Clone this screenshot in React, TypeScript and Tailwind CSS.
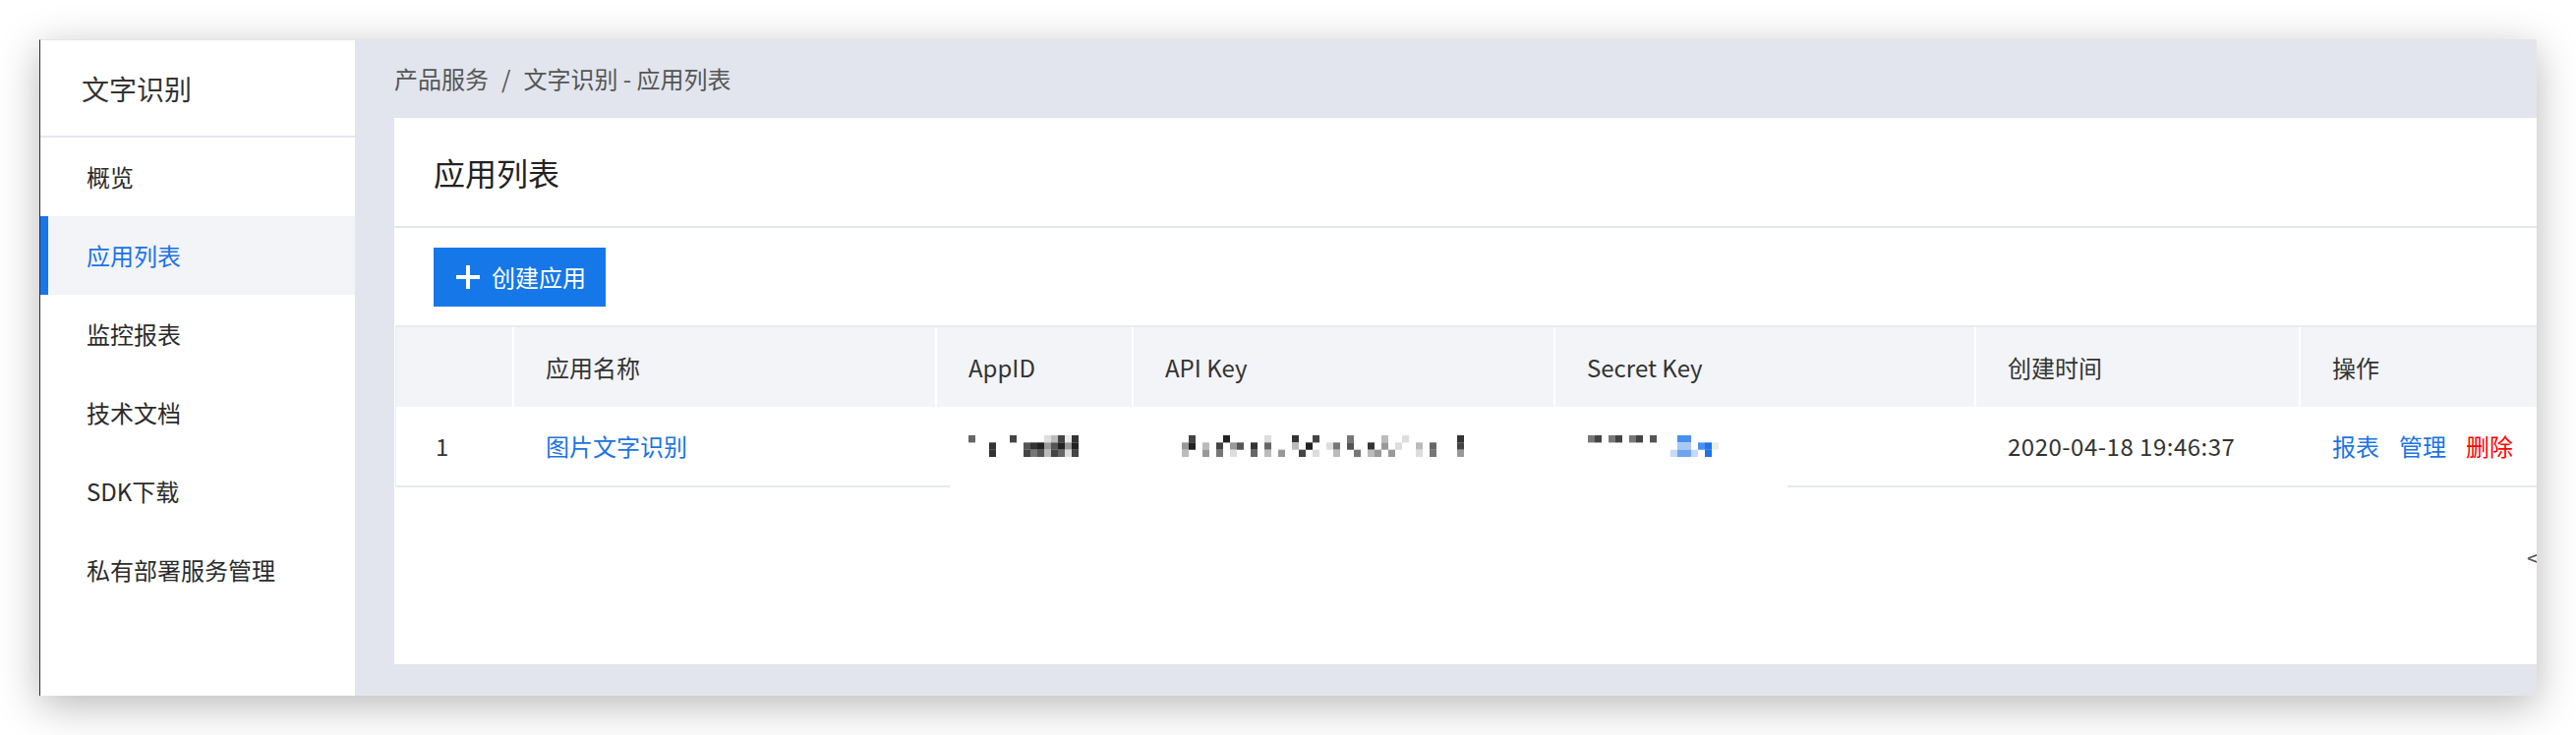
import React from 'react';

const menu = ['概览', '应用列表', '监控报表', '技术文档', 'SDK下载', '私有部署服务管理'];

const palette: Record<string, string> = {
  '1': '#222', '2': '#333', '3': '#444', '4': '#555', '5': '#666', '6': '#777',
  '7': '#999', '8': '#bbb', '9': '#ddd', a: '#ececec',
  b: '#1f74e8', c: '#4a8ff0', d: '#6fa5ef', e: '#a9c9f5', f: '#c4daf8',
};

// pixelated (redacted) values, one char per 7px block
const Mosaic = ({ rows, cols }: { rows: string[]; cols: number }) => (
  <svg width={cols * 7} height={22} className="block">
    {rows.map((r, y) =>
      r.padEnd(cols).slice(0, cols).split('').map((ch, x) =>
        ch === ' ' ? null : (
          <rect key={`${x}-${y}`} x={x * 7} y={y * 7.33} width={7} height={7.4} fill={palette[ch]} />
        )
      )
    )}
  </svg>
);

const appId = ['5     3    983a2', '   2    42174171', '   2    36483593'];
const apiKey = [
  '  3    1     9   2  3    6    8  9       2  ',
  ' 71 8 3 74 2 5   8 1  96 4  2 7 9  8 5   3 ',
  ' 8  7 6 9  5 8 7  3 9  8  6 87 7   9 6   7 ',
];
const secretKey = ['63 63 63 4   cc    ', '             ee cba', '            fddf b '];

const widths = ['w-[120px]', 'w-[430px]', 'w-[200px]', 'w-[429px]', 'w-[428px]', 'w-[330px]', 'flex-1'];
const heads = ['', '应用名称', 'AppID', 'API Key', 'Secret Key', '创建时间', '操作'];

export default function App() {
  return (
    <div className="w-full h-[748px] bg-white pt-[40px] pl-[40px] overflow-hidden font-['Noto_Sans_CJK_SC','Liberation_Sans',sans-serif]">
      <div className="w-[2540px] h-[668px] flex shadow-[0_10px_40px_rgba(0,0,0,0.28)] overflow-hidden">
        {/* Sidebar */}
        <aside className="w-[321px] shrink-0 bg-white border-l border-[#2b2b36] border-t border-t-[#e4e6ec]">
          <div className="h-[99px] border-b-2 border-[#e6e8ee] flex items-center pl-[42px] text-[28px] leading-none text-[#333]">
            文字识别
          </div>
          {menu.map((m) =>
            m === '应用列表' ? (
              <div key={m} className="h-[80px] flex items-center border-l-[8px] border-[#1677e9] pl-[39px] bg-[#f3f4f8] text-[24px] leading-none text-[#1a73e8]">
                {m}
              </div>
            ) : (
              <div key={m} className="h-[80px] flex items-center pl-[47px] text-[24px] leading-none text-[#2b2b2b]">
                {m}
              </div>
            )
          )}
        </aside>

        {/* Main */}
        <main className="flex-1 min-w-0 bg-[#e2e5ed] overflow-hidden">
          <div className="h-[80px] flex items-center pl-[40px] text-[24px] leading-none text-[#555]">
            产品服务<span className="mx-[13px]">/</span>文字识别 - 应用列表
          </div>

          <div className="ml-[40px] w-[2300px] h-[556px] bg-white">
            <div className="h-[112px] border-b-2 border-[#e3e6ec] flex items-center pl-[40px] text-[32px] leading-none text-[#222]">
              应用列表
            </div>
            <div className="pt-[20px] pl-[40px]">
              <button className="h-[60px] flex items-center gap-[12px] pl-[23px] pr-[20px] bg-[#1677e8] text-white text-[24px] leading-none">
                <svg width="24" height="24" viewBox="0 0 24 24" className="block">
                  <rect x="10" y="0" width="4" height="24" fill="#fff" />
                  <rect x="0" y="10" width="24" height="4" fill="#fff" />
                </svg>
                创建应用
              </button>
            </div>

            {/* Table */}
            <div className="mt-[19px] ml-px border-t-2 border-l border-[#e9ebf0]">
              <div className="h-[81px] flex bg-[#f3f4f8] text-[24px] leading-none text-[#333]">
                {heads.map((h, i) => (
                  <div
                    key={i}
                    className={`${widths[i]} ${i < 6 ? 'border-r-2 border-white' : ''} ${i === 0 ? 'pl-[40px]' : 'pl-[32px]'} flex items-center shrink-0`}
                  >
                    {h}
                  </div>
                ))}
              </div>
              <div className="relative h-[82px] flex border-b-2 border-[#e6e9f0] text-[24px] leading-none text-[#333]">
                <div className="w-[120px] shrink-0 pl-[40px] flex items-center">1</div>
                <div className="w-[430px] shrink-0 pl-[32px] flex items-center text-[#1b74e4]">图片文字识别</div>
                <div className="w-[200px] shrink-0 pl-[32px] flex items-center">
                  <Mosaic rows={appId} cols={16} />
                </div>
                <div className="w-[429px] shrink-0 pl-[42px] flex items-center">
                  <Mosaic rows={apiKey} cols={45} />
                </div>
                <div className="w-[428px] shrink-0 pl-[33px] flex items-center">
                  <Mosaic rows={secretKey} cols={19} />
                </div>
                <div className="w-[330px] shrink-0 pl-[32px] flex items-center tracking-[0.5px]">2020-04-18 19:46:37</div>
                <div className="flex-1 pl-[32px] flex items-center gap-[20px]">
                  <span className="text-[#1b74e4]">报表</span>
                  <span className="text-[#1b74e4]">管理</span>
                  <span className="text-[#ff0000]">删除</span>
                </div>
                {/* white redaction patch over the row rule */}
                <div className="absolute left-[563px] -bottom-[2px] w-[852px] h-[2px] bg-white" />
              </div>
            </div>

            {/* pager, cut off by the window edge */}
            <div className="mt-[55px] pl-[2169px] flex text-[24px] leading-[32px] text-[#555]">
              <span>&lt;</span>
            </div>
          </div>
        </main>
      </div>
    </div>
  );
}
